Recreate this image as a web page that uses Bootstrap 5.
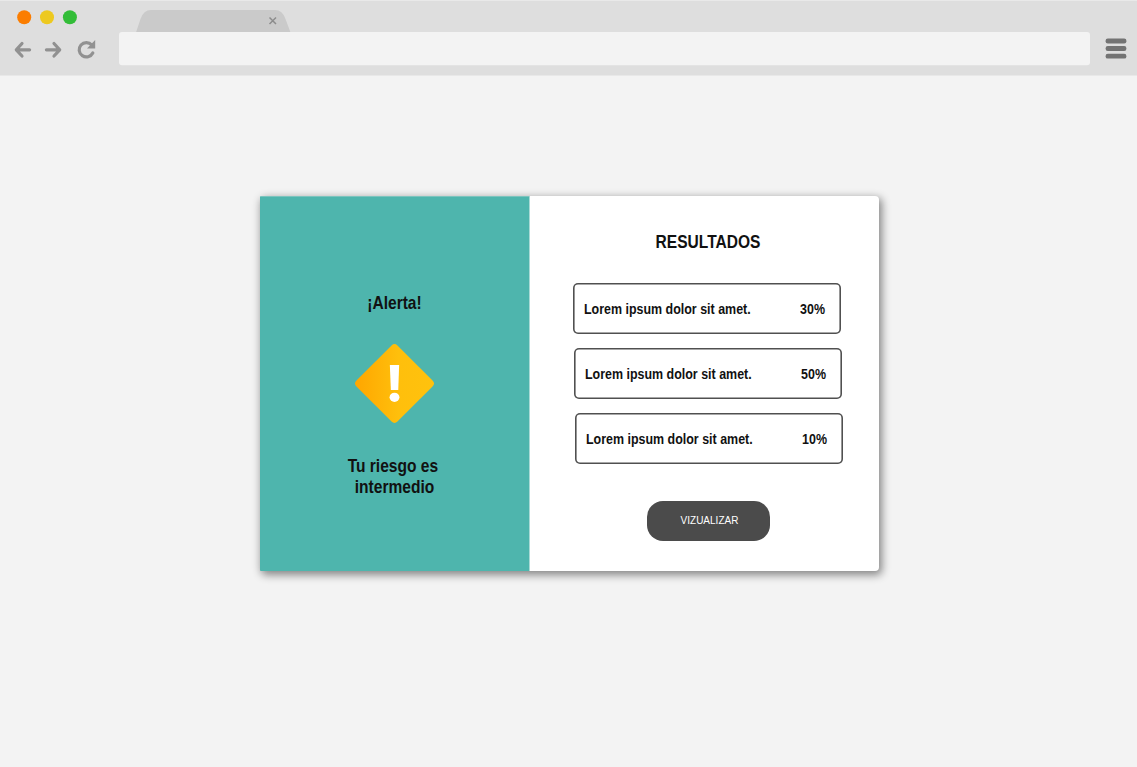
<!DOCTYPE html>
<html lang="es">
<head>
<meta charset="utf-8">
<title>Resultados</title>
<link href="https://cdn.jsdelivr.net/npm/bootstrap@5.3.0/dist/css/bootstrap.min.css" rel="stylesheet">
<style>
body{background:#f3f3f3;color:#111;font-family:"Liberation Sans",Arial,sans-serif;height:767px;overflow:hidden}
.chrome{height:76px;background:#dedede;border-top:1px solid #e9e9e9;border-bottom:1px solid #e8e8e8}
.chrome svg{display:block}
.panel{width:619px;height:375px;margin:120px 0 0 260px;border-radius:4px;background:#fff;box-shadow:2px 3px 9px 1px rgba(0,0,0,.45)}
.alert-side{width:270px;background:#4eb5ad;border-right:1px solid #a9dad6;border-top:1px solid #7cc4be;padding-top:95px;border-radius:1px 0 0 1px}
.alert-icon{margin:30px auto 31px}
.title{font-size:19px;line-height:21px;font-weight:700;transform:scaleX(.818)}
.results{width:349px;padding-top:35px}
.results .title{margin-left:7px}
.item-list{margin:31px 0 0 43px}
.item{width:268px;height:51px;box-shadow:inset 0 0 0 1.600px #505050;border-radius:5px;font-size:15.500px;font-weight:700;padding:0 16px 0 11px;margin-bottom:14px}
.item:nth-child(2){margin-left:1px}
.item:nth-child(3){margin:0 0 0 2px}
.item span{display:block;transform:scaleX(.803);transform-origin:left;white-space:nowrap}
.item span+span{transform-origin:right}
.view-btn{width:123px;height:40px;border-radius:16px;background:#4b4b4b;color:#fff;border:0;font:10px "Liberation Sans",Arial,sans-serif;margin:37px 0 0 117px;padding:0 0 1px 2px}
</style>
</head>
<body>
<header class="chrome">
<svg width="1137" height="74" viewBox="0 1 1137 74">
<circle cx="24.200" cy="17.200" r="7" fill="#fb7d00"/><circle cx="47" cy="17.200" r="7" fill="#edc91f"/><circle cx="69.900" cy="17.200" r="7" fill="#33bd38"/>
<path d="M136 32.500L140.500 19Q143.500 10 151 10H275Q282.500 10 285.500 19L290.500 32.500Z" fill="#cacaca"/>
<path d="M269.500 17.500L276 24M276 17.500L269.500 24" stroke="#8c8c8c" stroke-width="1.500"/>
<rect x="119" y="32" width="971" height="33.300" rx="3" fill="#f3f3f3"/>
<g fill="none" stroke="#919191" stroke-width="3.200"><path stroke-linecap="round" stroke-linejoin="round" d="M29.600 49.800H17.500M22 43.500L16.300 49.800L22 56M46.400 49.800H58.500M54 43.500L59.700 49.800L54 56"/><path stroke-linecap="round" d="M91.800 45A7.200 7.200 0 1 0 92.800 53"/></g>
<path d="M95.200 40V48.500H87L91 44.300Z" fill="#919191"/>
<g fill="#737373"><rect x="1105.600" y="38.600" width="20.800" height="4.900" rx="2.200"/><rect x="1105.600" y="46.100" width="20.800" height="4.900" rx="2.200"/><rect x="1105.600" y="53.700" width="20.800" height="4.900" rx="2.200"/></g>
</svg>
</header>
<main class="panel d-flex">
<section class="alert-side text-center">
<h1 class="title mb-0">¡Alerta!</h1>
<svg class="alert-icon d-block" width="81" height="81" viewBox="0 0 82 82">
<defs><linearGradient id="amber"><stop stop-color="#ffa600"/><stop offset=".55" stop-color="#ffbf0c"/><stop offset="1" stop-color="#ffc20d"/></linearGradient></defs>
<path d="M38 2.500Q41 -.500 44 2.500L79.500 38Q82.500 41 79.500 44L44 79.500Q41 82.500 38 79.500L2.500 44Q-.500 41 2.500 38Z" fill="url(#amber)"/>
<path d="M36.300 22.200H45.700L44.800 47.500H37.300Z" fill="#fff"/><ellipse cx="41" cy="55" rx="5" ry="4.700" fill="#fff"/>
</svg>
<p class="title mb-0"><span class="pe-1">Tu riesgo es</span><br>intermedio</p>
</section>
<section class="results">
<h2 class="title text-center mb-0">RESULTADOS</h2>
<div class="item-list">
<div class="item d-flex align-items-center"><span>Lorem ipsum dolor sit amet.</span><span class="ms-auto">30%</span></div>
<div class="item d-flex align-items-center"><span>Lorem ipsum dolor sit amet.</span><span class="ms-auto">50%</span></div>
<div class="item d-flex align-items-center"><span>Lorem ipsum dolor sit amet.</span><span class="ms-auto">10%</span></div>
</div>
<button class="view-btn">VIZUALIZAR</button>
</section>
</main>
<script src="https://cdn.jsdelivr.net/npm/bootstrap@5.3.0/dist/js/bootstrap.bundle.min.js"></script>
</body>
</html>
